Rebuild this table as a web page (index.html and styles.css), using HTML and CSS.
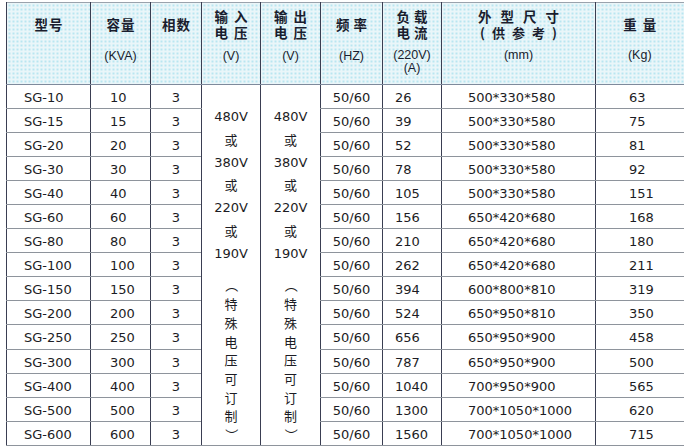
FILE: index.html
```html
<!DOCTYPE html>
<html lang="zh">
<head>
<meta charset="utf-8">
<title>SG 变压器参数表</title>
<link rel="stylesheet" href="styles.css">
</head>
<body>
<table class="spec">
  <colgroup>
    <col class="c-model"><col class="c-cap"><col class="c-phase"><col class="c-in"><col class="c-out"><col class="c-freq"><col class="c-load"><col class="c-dim"><col class="c-wt">
  </colgroup>
  <thead>
    <tr class="head">
      <th><div class="title"><span class="zh sp1">型号</span></div></th>
      <th><div class="title"><span class="zh sp1">容量</span></div><div class="unit">(KVA)</div></th>
      <th><div class="title"><span class="zh sp1">相数</span></div></th>
      <th><div class="title"><span class="zh sp6 two">输入<br>电压</span></div><div class="unit">(V)</div></th>
      <th><div class="title"><span class="zh sp6 two">输出<br>电压</span></div><div class="unit">(V)</div></th>
      <th><div class="title"><span class="zh sp4">频率</span></div><div class="unit">(HZ)</div></th>
      <th><div class="title"><span class="zh sp4 two">负载<br>电流</span></div><div class="unit tight">(220V)<br>(A)</div></th>
      <th><div class="title"><span class="zh sp9 two">外型尺寸<br><span class="sp8">(供参考)</span></span></div><div class="unit up">(mm)</div></th>
      <th><div class="title"><span class="zh sp6">重量</span></div><div class="unit up">(Kg)</div></th>
    </tr>
  </thead>
  <tbody>
    <tr>
      <td class="model">SG-10</td><td class="cap">10</td><td class="ctr">3</td>
      <td class="volt" rowspan="15"><div class="vlist"><span>480V</span><span class="zh">或</span><span>380V</span><span class="zh">或</span><span>220V</span><span class="zh">或</span><span>190V</span></div><div class="vnote zh"><span class="vert">（</span><span>特</span><span>殊</span><span>电</span><span>压</span><span>可</span><span>订</span><span>制</span><span class="vert">）</span></div></td>
      <td class="volt" rowspan="15"><div class="vlist"><span>480V</span><span class="zh">或</span><span>380V</span><span class="zh">或</span><span>220V</span><span class="zh">或</span><span>190V</span></div><div class="vnote zh"><span class="vert">（</span><span>特</span><span>殊</span><span>电</span><span>压</span><span>可</span><span>订</span><span>制</span><span class="vert">）</span></div></td>
      <td class="ctr">50/60</td><td class="load">26</td><td class="dim">500*330*580</td><td class="wt">63</td>
    </tr>
    <tr><td class="model">SG-15</td><td class="cap">15</td><td class="ctr">3</td><td class="ctr">50/60</td><td class="load">39</td><td class="dim">500*330*580</td><td class="wt">75</td></tr>
    <tr><td class="model">SG-20</td><td class="cap">20</td><td class="ctr">3</td><td class="ctr">50/60</td><td class="load">52</td><td class="dim">500*330*580</td><td class="wt">81</td></tr>
    <tr><td class="model">SG-30</td><td class="cap">30</td><td class="ctr">3</td><td class="ctr">50/60</td><td class="load">78</td><td class="dim">500*330*580</td><td class="wt">92</td></tr>
    <tr><td class="model">SG-40</td><td class="cap">40</td><td class="ctr">3</td><td class="ctr">50/60</td><td class="load">105</td><td class="dim">500*330*580</td><td class="wt">151</td></tr>
    <tr><td class="model">SG-60</td><td class="cap">60</td><td class="ctr">3</td><td class="ctr">50/60</td><td class="load">156</td><td class="dim">650*420*680</td><td class="wt">168</td></tr>
    <tr><td class="model">SG-80</td><td class="cap">80</td><td class="ctr">3</td><td class="ctr">50/60</td><td class="load">210</td><td class="dim">650*420*680</td><td class="wt">180</td></tr>
    <tr><td class="model">SG-100</td><td class="cap">100</td><td class="ctr">3</td><td class="ctr">50/60</td><td class="load">262</td><td class="dim">650*420*680</td><td class="wt">211</td></tr>
    <tr><td class="model">SG-150</td><td class="cap">150</td><td class="ctr">3</td><td class="ctr">50/60</td><td class="load">394</td><td class="dim">600*800*810</td><td class="wt">319</td></tr>
    <tr><td class="model">SG-200</td><td class="cap">200</td><td class="ctr">3</td><td class="ctr">50/60</td><td class="load">524</td><td class="dim">650*950*810</td><td class="wt">350</td></tr>
    <tr><td class="model">SG-250</td><td class="cap">250</td><td class="ctr">3</td><td class="ctr">50/60</td><td class="load">656</td><td class="dim">650*950*900</td><td class="wt">458</td></tr>
    <tr><td class="model">SG-300</td><td class="cap">300</td><td class="ctr">3</td><td class="ctr">50/60</td><td class="load">787</td><td class="dim">650*950*900</td><td class="wt">500</td></tr>
    <tr><td class="model">SG-400</td><td class="cap">400</td><td class="ctr">3</td><td class="ctr">50/60</td><td class="load">1040</td><td class="dim">700*950*900</td><td class="wt">565</td></tr>
    <tr><td class="model">SG-500</td><td class="cap">500</td><td class="ctr">3</td><td class="ctr">50/60</td><td class="load">1300</td><td class="dim">700*1050*1000</td><td class="wt">620</td></tr>
    <tr><td class="model">SG-600</td><td class="cap">600</td><td class="ctr">3</td><td class="ctr">50/60</td><td class="load">1560</td><td class="dim">700*1050*1000</td><td class="wt">715</td></tr>
  </tbody>
</table>
</body>
</html>
```

FILE: styles.css
```css
html, body {
  margin: 0;
  padding: 0;
  background: #ffffff;
}

body {
  font-family: "DejaVu Sans", "Noto Sans CJK SC", sans-serif;
  color: #1c1c24;
}

.spec {
  margin: 2px 0 0 6px;
  width: 677px;
  table-layout: fixed;
  border-collapse: collapse;
  border-left: 1px solid #2a2f4a;
  border-top: 1px solid #9aa3ad;
}

.c-model { width: 84px; }
.c-cap { width: 60px; }
.c-phase { width: 51px; }
.c-in { width: 59px; }
.c-out { width: 60px; }
.c-freq { width: 62px; }
.c-load { width: 59px; }
.c-dim { width: 154px; }
.c-wt { width: 88px; }

.zh {
  font-family: "Noto Sans CJK SC", sans-serif;
}

.head {
  height: 82px;
}

.head th {
  background-color: #eaf6f9;
  background-image: radial-gradient(circle, #b9e6f0 0.8px, transparent 1.2px);
  background-size: 4px 4px;
  vertical-align: top;
  padding: 5px 0 0;
  font-weight: normal;
  border-left: 1px solid #3a3e52;
  border-bottom: 1px solid #7e8a9c;
  text-align: center;
}

.title {
  height: 32px;
  display: flex;
  flex-direction: column;
  justify-content: center;
  align-items: center;
}

.title > .zh {
  display: block;
  font-size: 13.5px;
  line-height: 16px;
  font-weight: 700;
  color: #1a1d2e;
  white-space: nowrap;
}

.sp1 { letter-spacing: 1px; padding-left: 1px; }
.sp4 { letter-spacing: 4px; padding-left: 4px; }
.sp6 { letter-spacing: 6px; padding-left: 6px; }
.sp9 { letter-spacing: 9px; padding-left: 9px; }
.title .sp8 { letter-spacing: 7px; margin-left: -2px; font-size: 13px; }

.unit {
  margin-top: 9px;
  font-family: "Liberation Sans", "DejaVu Sans", sans-serif;
  font-size: 12.5px;
  line-height: 14px;
  color: #1a1d2e;
}

.unit.tight {
  line-height: 13px;
}

.unit.up {
  margin-top: 8px;
}

tbody tr {
  height: 24px;
}

tbody td {
  font-size: 13px;
  line-height: 16px;
  padding: 3px 0 0;
  border-left: 1px solid #3a3e52;
  border-bottom: 1px solid #8e949c;
  white-space: nowrap;
  vertical-align: middle;
}

.model { padding-left: 17px; }
.cap { padding-left: 19px; }
.ctr { text-align: center; }
.load { padding-left: 12px; }
.dim { padding-left: 26px; }
.wt { padding-left: 33px; }

td.volt {
  vertical-align: top;
  padding: 21px 0 0;
  text-align: center;
  border-bottom: 1px solid #8e949c;
}

.vlist {
  display: flex;
  flex-direction: column;
  align-items: center;
}

.vlist span {
  display: block;
  line-height: 22.8px;
  font-size: 13px;
}

.vnote {
  margin-top: 11px;
  display: flex;
  flex-direction: column;
  align-items: center;
}

.vnote span {
  display: block;
  font-size: 13px;
  line-height: 18.7px;
}

.vnote .vert {
  writing-mode: vertical-rl;
  height: 18.7px;
  width: 18.7px;
  line-height: 18.7px;
  text-align: center;
  overflow: hidden;
}
```
